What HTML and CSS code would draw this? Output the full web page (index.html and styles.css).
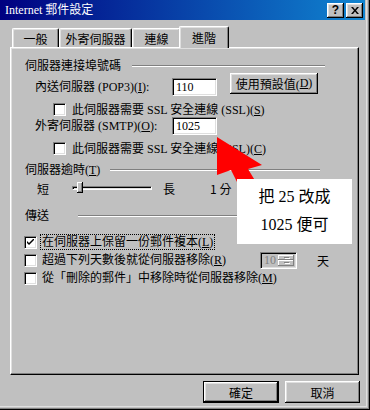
FILE: index.html
```html
<!DOCTYPE html>
<html>
<head>
<meta charset="utf-8">
<link rel="stylesheet" href="styles.css">
</head>
<body>
<div class="window">
  <div class="titlebar">
    <span class="title">Internet 郵件設定</span>
    <div class="tbtns">
      <span class="tbtn help">?</span>
      <span class="tbtn close"><svg width="8" height="7" viewBox="0 0 8 7"><path d="M0 0h2l2 2.5L6 0h2L5 3.5 8 7H6L4 4.5 2 7H0l3-3.5z" fill="#000"/></svg></span>
    </div>
  </div>
  <div class="tabs">
    <div class="tab t1">一般</div>
    <div class="tab t2">外寄伺服器</div>
    <div class="tab t3">連線</div>
    <div class="tab active">進階</div>
  </div>
  <div class="panel">
    <div class="ghead g1"><span>伺服器連接埠號碼</span><i class="etch"></i></div>
    <div class="row r-pop">
      <span class="lbl">內送伺服器 (POP3)(<u>I</u>):</span>
      <span class="field">110</span>
      <span class="btn defaults">使用預設值(<u>D</u>)</span>
    </div>
    <div class="row r-ssl1">
      <span class="cb"></span>
      <span class="cblbl">此伺服器需要 SSL 安全連線 (SSL)(<u>S</u>)</span>
    </div>
    <div class="row r-smtp">
      <span class="lbl">外寄伺服器 (SMTP)(<u>O</u>):</span>
      <span class="field">1025</span>
    </div>
    <div class="row r-ssl2">
      <span class="cb"></span>
      <span class="cblbl">此伺服器需要 SSL 安全連線 (SSL)(<u>C</u>)</span>
    </div>
    <div class="ghead g2"><span>伺服器逾時(<u>T</u>)</span><i class="etch"></i></div>
    <div class="row r-slider">
      <span class="short">短</span>
      <span class="track"><span class="thumb"></span></span>
      <span class="long">長</span>
      <span class="minute">1 分</span>
    </div>
    <div class="ghead g3"><span>傳送</span><i class="etch"></i></div>
    <div class="row crow c1">
      <span class="cb"><svg width="7" height="7" viewBox="0 0 7 7"><path d="M0 2l2 2 5-5v2L2 6 0 4z" fill="#000"/></svg></span>
      <span class="cblbl focus">在伺服器上保留一份郵件複本(<u>L</u>)</span>
    </div>
    <div class="row crow c2">
      <span class="cb"></span>
      <span class="cblbl wide">超過下列天數後就從伺服器移除(<u>R</u>)</span>
      <span class="spin"><span class="spinval">10</span><span class="spinbtns"><span class="sb"><i class="up"></i></span><span class="sb"><i class="down"></i></span></span></span>
      <span class="day">天</span>
    </div>
    <div class="row crow c3">
      <span class="cb"></span>
      <span class="cblbl">從「刪除的郵件」中移除時從伺服器移除(<u>M</u>)</span>
    </div>
  </div>
  <div class="actions">
    <span class="btn default">確定</span>
    <span class="btn">取消</span>
  </div>

  <svg class="arrow" width="370" height="410" viewBox="0 0 370 410"><polygon points="217,137 262,165 248,169 262,192 242,192 231,170 217,175" fill="#ff0000"/></svg>
  <div class="note">
    <div>把 25 改成</div>
    <div>1025 便可</div>
  </div>
</div>
</body>
</html>
```
FILE: styles.css
```css
* { box-sizing: border-box; }
html, body { margin: 0; padding: 0; }
body {
  width: 370px;
  height: 410px;
  background: #c0c0c0;
  font-family: "Liberation Serif", "Noto Sans CJK TC", serif;
  font-size: 12px;
  color: #000;
  overflow: hidden;
}
u { text-decoration: underline; }
.window {
  position: relative;
  width: 370px;
  height: 410px;
  background: #c0c0c0;
  border-right: 1px solid #000;
  border-bottom: 1px solid #000;
  box-shadow: inset -1px -1px #808080, inset -2px -2px #c0c0c0, inset -3px -3px #dfdfdf;
  padding-right: 4px;
  display: flex;
  flex-direction: column;
}
.titlebar {
  height: 20px;
  background: linear-gradient(90deg, #000080 0%, #1084d0 100%);
  display: flex;
  align-items: center;
  padding-left: 5px;
  padding-right: 2px;
}
.title {
  color: #fff;
  font-size: 12px;
  flex: 1;
  line-height: 14px;
}
.tbtns { display: flex; gap: 2px; }
.tbtn {
  width: 17px;
  height: 15px;
  background: #c0c0c0;
  box-shadow: inset -1px -1px #000, inset 1px 1px #fff, inset -2px -2px #808080, inset 2px 2px #dfdfdf;
  display: flex;
  align-items: center;
  justify-content: center;
  font-family: "Liberation Sans", sans-serif;
  font-weight: bold;
  font-size: 12px;
  line-height: 12px;
}
.tabs {
  display: flex;
  margin-left: 12px;
  margin-top: 8px;
  height: 19px;
  position: relative;
  z-index: 2;
}
.tab {
  height: 19px;
  border-top: 1px solid #fff;
  border-left: 1px solid #fff;
  border-right: 1px solid #000;
  border-radius: 2px 2px 0 0;
  box-shadow: inset -1px 0 #808080, inset 1px 1px #dfdfdf;
  display: flex;
  align-items: center;
  justify-content: center;
  font-family: "Noto Sans CJK TC", sans-serif;
  font-size: 12px;
}
.t1 { width: 47px; }
.t2 { width: 73px; }
.t3 { width: 49px; }
.tab.active {
  width: 50px;
  margin-left: -2px;
  margin-top: -2px;
  height: 22px;
  align-items: flex-start;
  padding-top: 2px;
  background: #c0c0c0;
  box-shadow: inset -1px 0 #808080, inset 1px 1px #dfdfdf;
}
.panel {
  margin-left: 10px;
  width: 349px;
  height: 328px;
  border: 1px solid;
  border-color: #fff #000 #000 #fff;
  box-shadow: inset -1px -1px #808080, inset 1px 1px #dfdfdf;
  display: flex;
  flex-direction: column;
  position: relative;
  z-index: 1;
}
.ghead {
  display: flex;
  align-items: center;
  height: 14px;
  padding-left: 14px;
  line-height: 14px;
}
.etch {
  flex: 1;
  height: 2px;
  border-top: 1px solid #808080;
  border-bottom: 1px solid #fff;
}
.g1 { margin-top: 11px; }
.g1 .etch { margin-left: 11px; margin-right: 33px; }
.g2 { margin-top: 0; }
.g2 .etch { margin-left: 10px; margin-right: 38px; }
.g3 { margin-top: 10px; }
.g3 .etch { margin-left: 29px; margin-right: 33px; }
.row { display: flex; }
.lbl { width: 137px; line-height: 18px; white-space: nowrap; }
.field {
  width: 45px;
  height: 18px;
  background: #fff;
  border: 1px solid;
  border-color: #808080 #fff #fff #808080;
  box-shadow: inset 1px 1px #000, inset -1px -1px #dfdfdf;
  padding-left: 3px;
  line-height: 16px;
}
.btn {
  display: flex;
  align-items: center;
  justify-content: center;
  background: #c0c0c0;
  box-shadow: inset -1px -1px #000, inset 1px 1px #fff, inset -2px -2px #808080, inset 2px 2px #dfdfdf;
  white-space: nowrap;
}
.r-pop { margin-top: 0; height: 22px; padding-left: 24px; }
.r-pop .lbl { margin-top: 5px; }
.r-pop .field { margin-top: 5px; }
.defaults { width: 88px; height: 21px; margin-left: 13px; }
.cb {
  width: 13px;
  height: 13px;
  flex: none;
  background: #fff;
  border: 1px solid;
  border-color: #808080 #fff #fff #808080;
  box-shadow: inset 1px 1px #000, inset -1px -1px #dfdfdf;
  display: flex;
  align-items: center;
  justify-content: center;
}
.cblbl { margin-left: 6px; line-height: 14px; white-space: nowrap; }
.r-ssl1 { height: 22px; padding-left: 42px; align-items: flex-start; }
.r-ssl1 .cb { margin-top: 8px; }
.r-ssl1 .cblbl { margin-top: 8px; }
.r-smtp { height: 18px; padding-left: 24px; }
.r-ssl2 { height: 28px; padding-left: 42px; align-items: flex-start; }
.r-ssl2 .cb, .r-ssl2 .cblbl { margin-top: 7px; }
.r-slider {
  height: 22px;
  padding-left: 26px;
  align-items: center;
  font-family: "Noto Sans CJK TC", sans-serif;
}
.track {
  position: relative;
  margin-left: 23px;
  width: 80px;
  height: 4px;
  border-top: 1px solid #808080;
  border-left: 1px solid #808080;
  border-bottom: 1px solid #fff;
  border-right: 1px solid #fff;
  box-shadow: inset 1px 1px #000, inset -1px -1px #dfdfdf;
}
.thumb {
  position: absolute;
  left: 4px;
  top: -5px;
  width: 6px;
  height: 11px;
  background: #c0c0c0;
  box-shadow: inset -1px -1px #000, inset 1px 1px #fff, inset -2px -2px #808080;
}
.long { margin-left: 11px; }
.minute { margin-left: 35px; }
.crow { height: 18px; padding-left: 13px; align-items: center; }
.c1 { margin-top: 10px; }
.crow .cblbl { margin-left: 3px; padding: 0 1px; border: 1px solid transparent; }
.cblbl.focus { border: 1px dotted #000; }
.cblbl.wide { width: 220px; }
.spin {
  width: 37px;
  height: 17px;
  display: flex;
  border: 1px solid;
  border-color: #808080 #fff #fff #808080;
  box-shadow: inset 1px 1px #000, inset -1px -1px #dfdfdf;
  background: #c0c0c0;
  padding: 2px;
}
.spinval { flex: 1; color: #808080; line-height: 11px; padding-left: 1px; }
.spinbtns { width: 16px; display: flex; flex-direction: column; }
.sb {
  flex: 1;
  box-shadow: inset -1px -1px #808080, inset 1px 1px #fff;
  display: flex;
  align-items: center;
  justify-content: center;
}
.sb i { display: block; width: 5px; height: 1px; background: #808080; box-shadow: 1px 1px #fff; }
.day { margin-left: 20px; font-family: "Noto Sans CJK TC", sans-serif; }
.actions {
  display: flex;
  gap: 6px;
  margin-top: 6px;
  margin-left: 203px;
}
.actions .btn { height: 22px; font-family: "Noto Sans CJK TC", sans-serif; }
.actions .btn:first-child { width: 76px; }
.actions .btn:last-child { width: 75px; }
.btn.default {
  border: 1px solid #000;
}
.arrow {
  position: absolute;
  left: 0;
  top: 0;
  z-index: 5;
  pointer-events: none;
}
.note {
  position: absolute;
  left: 237px;
  top: 179px;
  width: 115px;
  height: 65px;
  background: #fff;
  z-index: 6;
  font-family: "Liberation Serif", "Noto Sans CJK TC", serif;
  font-size: 16px;
  line-height: 28px;
  padding-top: 4px;
  text-align: center;
}
```
